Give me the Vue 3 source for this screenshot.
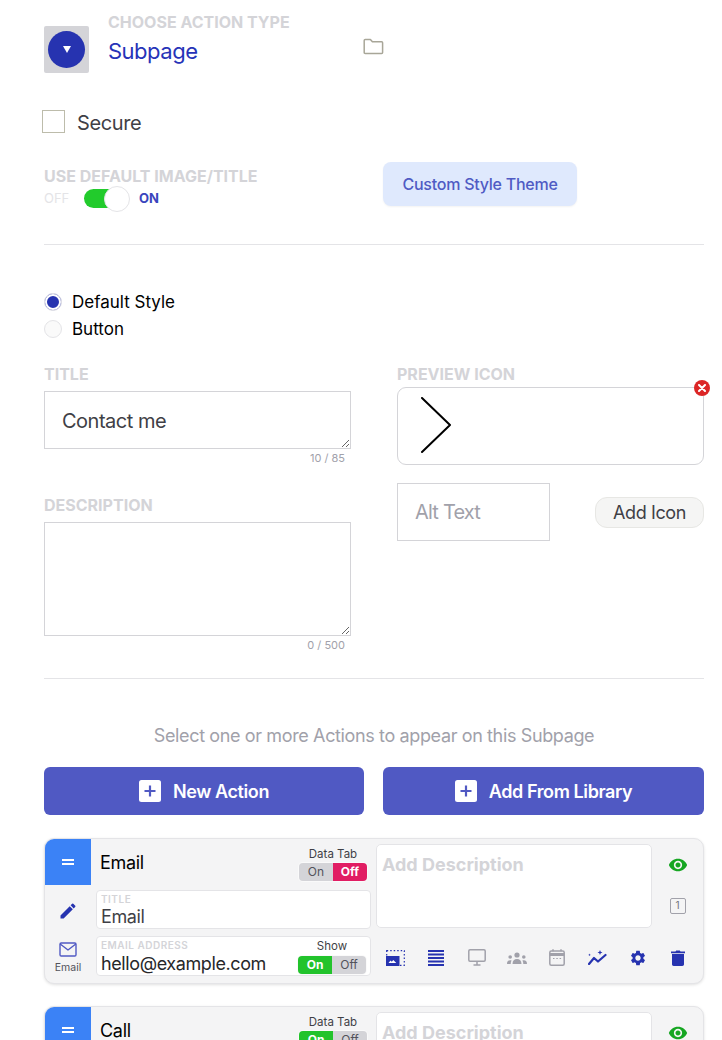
<script setup>
const cards = [
  { name: 'Email', dataOn: false, showTitle: 'Email', fieldLabel: 'EMAIL ADDRESS', value: 'hello@example.com', kind: 'Email', show: true },
  { name: 'Call', dataOn: true, showTitle: 'Call', fieldLabel: 'PHONE NUMBER', value: '555-555-5555', kind: 'Call', show: true }
]
</script>

<template>
  <div class="page">
    <section class="type-row">
      <div class="type-icon">
        <span class="type-circle"><span class="tri"></span></span>
      </div>
      <div class="type-text">
        <div class="label">CHOOSE ACTION TYPE</div>
        <div class="type-name">Subpage</div>
      </div>
      <svg class="folder" width="21" height="17" viewBox="0 0 21 17" fill="none" stroke="#a8a698" stroke-width="1.5" stroke-linejoin="round">
        <path d="M1.2 14.6V2.4c0-.6.4-1 1-1h5.2l2 2.4h9.2c.6 0 1 .4 1 1v9.8c0 .6-.4 1-1 1H2.2c-.6 0-1-.4-1-1z" />
      </svg>
    </section>

    <label class="secure">
      <span class="check"></span>
      <span class="secure-text">Secure</span>
    </label>

    <section class="default-row">
      <div class="default-left">
        <div class="label">USE DEFAULT IMAGE/TITLE</div>
        <div class="toggle-row">
          <span class="off-txt">OFF</span>
          <span class="switch"><span class="knob"></span></span>
          <span class="on-txt">ON</span>
        </div>
      </div>
      <button class="theme-btn">Custom Style Theme</button>
    </section>

    <hr class="rule rule-a" />

    <div class="radios">
      <div class="radio-line"><span class="radio selected"></span>Default Style</div>
      <div class="radio-line"><span class="radio"></span>Button</div>
    </div>

    <section class="form-grid">
      <div>
        <div class="label">TITLE</div>
        <textarea class="box title-box" readonly>Contact me</textarea>
        <div class="count">10 / 85</div>
        <div class="label desc-label">DESCRIPTION</div>
        <textarea class="box desc-box" readonly></textarea>
        <div class="count">0 / 500</div>
      </div>
      <div>
        <div class="label">PREVIEW ICON</div>
        <div class="preview">
          <svg class="chev" width="32" height="58" viewBox="0 0 32 58" fill="none" stroke="#000" stroke-width="2" stroke-linecap="round" stroke-linejoin="round">
            <path d="M2 1l28 27L2 55" />
          </svg>
          <span class="remove">
            <svg width="8" height="8" viewBox="0 0 8 8" stroke="#fff" stroke-width="2" stroke-linecap="round"><path d="M1 1l6 6M7 1L1 7" /></svg>
          </span>
        </div>
        <div class="alt-row">
          <input class="alt" placeholder="Alt Text" />
          <button class="add-icon">Add Icon</button>
        </div>
      </div>
    </section>

    <hr class="rule rule-b" />

    <p class="hint">Select one or more Actions to appear on this Subpage</p>

    <div class="actions">
      <button class="primary">
        <svg width="22" height="22" viewBox="0 0 22 22"><rect width="22" height="22" rx="2.5" fill="#fff" /><path d="M11 5.5v11M5.5 11h11" stroke="#5059c3" stroke-width="2.2" /></svg>
        New Action
      </button>
      <button class="primary">
        <svg width="22" height="22" viewBox="0 0 22 22"><rect width="22" height="22" rx="2.5" fill="#fff" /><path d="M11 5.5v11M5.5 11h11" stroke="#5059c3" stroke-width="2.2" /></svg>
        Add From Library
      </button>
    </div>

    <div v-for="card in cards" :key="card.name" class="card">
      <div class="handle"><span></span><span></span></div>
      <div class="head">
        <span class="card-name">{{ card.name }}</span>
        <div class="tab-wrap">
          <div class="mini-title">Data Tab</div>
          <div class="pill">
            <span :class="card.dataOn ? 'green' : 'idle'">On</span>
            <span :class="card.dataOn ? 'idle' : 'pink'">Off</span>
          </div>
        </div>
      </div>
      <div class="descr">Add Description</div>
      <div class="side">
        <svg width="20" height="20" viewBox="0 0 24 24" fill="#16a622"><path d="M12 4.5C7 4.500 2.730 7.610 1 12c1.730 4.390 6 7.500 11 7.500s9.270-3.110 11-7.500c-1.730-4.390-6-7.500-11-7.500zM12 17c-2.760 0-5-2.240-5-5s2.240-5 5-5 5 2.240 5 5-2.240 5-5 5zm0-8c-1.660 0-3 1.340-3 3s1.340 3 3 3 3-1.340 3-3-1.340-3-3-3z" /></svg>
        <span class="num">1</span>
      </div>
      <div class="edit-cell">
        <svg width="20" height="20" viewBox="0 0 24 24" fill="#2633b0"><path d="M3 17.250V21h3.750L17.810 9.940l-3.750-3.750L3 17.250zM20.710 7.040a1 1 0 000-1.410l-2.340-2.340a1 1 0 00-1.410 0l-1.830 1.830 3.750 3.750 1.830-1.830z" /></svg>
      </div>
      <div class="field title-field">
        <div class="field-label">TITLE</div>
        <div class="field-value">{{ card.showTitle }}</div>
      </div>
      <div class="kind-cell">
        <svg width="18" height="15" viewBox="0 0 18 15" fill="none" stroke="#5059c3" stroke-width="1.4" stroke-linejoin="round"><rect x="1" y="1" width="16" height="13" rx="1.2" /><path d="M1.2 2l7.800 6 7.800-6" /></svg>
        <span>{{ card.kind }}</span>
      </div>
      <div class="field value-field">
        <div>
          <div class="field-label">{{ card.fieldLabel }}</div>
          <div class="field-value dark">{{ card.value }}</div>
        </div>
        <div class="show-wrap">
          <div class="mini-title">Show</div>
          <div class="pill show-pill">
            <span class="green">On</span>
            <span class="idle">Off</span>
          </div>
        </div>
      </div>
      <div class="tools">
        <svg width="20" height="16" viewBox="0 0 20 16"><rect x=".7" y=".7" width="17.600" height="14.600" fill="none" stroke="#2633b0" stroke-width="1.200" stroke-dasharray="1.500 2" /><path d="M0 6h13.500v10H0z" fill="#2633b0" /><path d="M2.500 13l2-2.500 1.300 1.300L7.300 10l3 3z" fill="#fff" /></svg>
        <svg width="16" height="16" viewBox="0 0 16 16" stroke="#2633b0" stroke-width="1.800"><path d="M0 1h16M0 4.500h16M0 8h16M0 11.500h16M0 15h16" /></svg>
        <svg width="18" height="17" viewBox="0 0 18 17" fill="none" stroke="#a1a1aa" stroke-width="1.500"><rect x=".8" y=".8" width="16.400" height="11.400" rx="1.200" /><path d="M9 12.500v3M5.500 16h7" /></svg>
        <svg width="20" height="12" viewBox="0 0 20 12" fill="#a1a1aa"><circle cx="10" cy="3" r="2.600" /><circle cx="3.200" cy="5" r="1.800" /><circle cx="16.800" cy="5" r="1.800" /><path d="M5.500 12c0-3.500 1.800-5 4.500-5s4.500 1.500 4.500 5zM0 12c0-2.500 1-3.700 3.200-3.700.6 0 1 .1 1.400.3-.6 1-.9 2.100-.9 3.400zM20 12c0-2.500-1-3.700-3.200-3.700-.6 0-1 .1-1.400.3.600 1 .9 2.100.9 3.400z" /></svg>
        <svg width="16" height="17" viewBox="0 0 16 17" fill="none" stroke="#a1a1aa" stroke-width="1.500"><rect x=".8" y="2" width="14.400" height="14.200" rx="1.500" /><path d="M.8 5.500h14.400" stroke-width="3" /><path d="M4 .3v2M12 .3v2" /><path d="M4 9.500h1.500M7.300 9.500h1.500M10.600 9.500h1.500" stroke-width="1.200" /></svg>
        <svg width="19" height="15" viewBox="0 0 19 15" fill="#2633b0"><path d="M1 14l5-6 4 3.500L17.500 5" fill="none" stroke="#2633b0" stroke-width="2.200" stroke-linecap="round" stroke-linejoin="round" /><path d="M12 0l.7 1.800 1.800.7-1.800.7-.7 1.800-.7-1.800-1.800-.7 1.800-.7zM1.500 3.500l.4 1 1 .4-1 .4-.4 1-.4-1-1-.4 1-.4z" /></svg>
        <svg width="18" height="18" viewBox="0 0 24 24" fill="#2633b0"><path d="M19.140 12.940c.04-.3.060-.61.060-.94 0-.32-.02-.64-.07-.94l2.030-1.580c.18-.14.230-.41.120-.61l-1.920-3.320c-.12-.22-.37-.29-.59-.22l-2.390.96c-.5-.38-1.030-.7-1.620-.94l-.36-2.540c-.04-.24-.24-.41-.48-.41h-3.840c-.24 0-.43.17-.47.41l-.36 2.540c-.59.24-1.130.57-1.620.94l-2.390-.96c-.22-.08-.47 0-.59.22L2.740 8.870c-.12.21-.08.47.12.61l2.030 1.580c-.05.3-.09.63-.09.94s.02.64.07.94l-2.030 1.580c-.18.14-.23.41-.12.61l1.920 3.320c.12.22.37.29.59.22l2.390-.96c.5.38 1.030.7 1.620.94l.36 2.540c.05.24.24.41.48.41h3.840c.24 0 .44-.17.47-.41l.36-2.540c.59-.24 1.130-.56 1.620-.94l2.390.96c.22.08.47 0 .59-.22l1.920-3.320c.12-.22.07-.47-.12-.61l-2.010-1.580zM12 15.600c-1.980 0-3.600-1.620-3.600-3.600s1.620-3.600 3.600-3.600 3.600 1.620 3.600 3.600-1.620 3.600-3.600 3.600z" /></svg>
        <svg width="14" height="16" viewBox="0 0 14 16" fill="#2633b0"><path d="M0 1.500h4.500L5.200.5h3.600l.7 1H14V3.200H0zM1 4h12v10.300c0 .9-.7 1.700-1.700 1.700H2.700C1.700 16 1 15.200 1 14.300z" /></svg>
      </div>
    </div>
  </div>
</template>

<style scoped>
.page {
  box-sizing: border-box;
  width: 722px;
  height: 1040px;
  overflow: hidden;
  padding: 14px 18px 0 44px;
  font-family: Inter, "Liberation Sans", sans-serif;
  color: #3f3f46;
  background: #fff;
}
.label {
  font-size: 16px;
  line-height: 16px;
  font-weight: 700;
  color: #d4d4d8;
}
.type-row {
  display: flex;
  align-items: flex-start;
  height: 59px;
}
.type-icon {
  display: flex;
  align-items: center;
  justify-content: center;
  width: 45px;
  height: 47px;
  margin-top: 12px;
  border-radius: 2px;
  background: #d4d4d8;
}
.type-circle {
  display: flex;
  align-items: center;
  justify-content: center;
  width: 37px;
  height: 37px;
  border-radius: 50%;
  background: #2633b0;
}
.tri {
  width: 0;
  height: 0;
  border-left: 4px solid transparent;
  border-right: 4px solid transparent;
  border-top: 7px solid #fff;
}
.type-text {
  width: 255px;
  margin-left: 19px;
}
.type-name {
  margin-top: 7px;
  font-size: 22px;
  line-height: 28px;
  letter-spacing: -0.5px;
  color: #2633b8;
}
.folder {
  margin-top: 24px;
}
.secure {
  display: flex;
  align-items: flex-start;
  gap: 12px;
  margin: 37px 0 0 -2px;
  font-size: 20px;
  line-height: 23px;
  letter-spacing: -0.4px;
}
.secure-text {
  margin-top: 2px;
}
.check {
  box-sizing: border-box;
  width: 23px;
  height: 23px;
  border: 1px solid #bdbcab;
}
.default-row {
  display: flex;
  align-items: flex-start;
  margin-top: 27px;
}
.default-left {
  width: 339px;
  padding-top: 6px;
}
.toggle-row {
  display: flex;
  align-items: center;
  height: 20px;
  margin-top: 4px;
  font-size: 13px;
}
.off-txt {
  width: 40px;
  color: #e4e4e7;
}
.on-txt {
  margin-left: 11px;
  font-weight: 700;
  color: #3a45bd;
}
.switch {
  position: relative;
  width: 44px;
  height: 19px;
  border-radius: 10px;
  background: #22cb2c;
}
.knob {
  position: absolute;
  top: -3px;
  right: -2px;
  box-sizing: border-box;
  width: 26px;
  height: 26px;
  border: 1px solid #e4e4e7;
  border-radius: 50%;
  background: #fff;
}
.theme-btn {
  width: 194px;
  height: 44px;
  border: 0;
  border-radius: 8px;
  background: #dfe9fd;
  box-shadow: 0 1px 2px rgba(0, 0, 0, 0.05);
  font: 500 16px Inter, sans-serif;
  letter-spacing: -0.25px;
  color: #4f5bc4;
}
.rule {
  height: 1px;
  margin: 0;
  border: 0;
  background: #e4e4e7;
}
.rule-a {
  margin-top: 36px;
}
.radios {
  margin-top: 43px;
  font-size: 17px;
  color: #000;
}
.radio-line {
  display: flex;
  align-items: center;
  gap: 10px;
  height: 27px;
}
.radio {
  box-sizing: border-box;
  width: 18px;
  height: 18px;
  border: 1px solid #e4e4e7;
  border-radius: 50%;
  background: #fafafa;
}
.radio.selected {
  background: #2633b0;
  box-shadow: inset 0 0 0 2px #fff;
}
.form-grid {
  display: grid;
  grid-template-columns: 307px 307px;
  gap: 46px;
  margin-top: 24px;
}
.box {
  display: block;
  box-sizing: border-box;
  width: 307px;
  padding: 17px 17px 15px;
  border: 1px solid #d4d4d8;
  border-radius: 0;
  outline: none;
  background: #fff;
  font: 20px/24px Inter, sans-serif;
  letter-spacing: -0.5px;
  color: #3f3f46;
}
.title-box {
  height: 58px;
  margin-top: 9px;
}
.desc-box {
  height: 114px;
  margin-top: 9px;
}
.count {
  height: 18px;
  padding-right: 6px;
  font-size: 11px;
  line-height: 18px;
  text-align: right;
  color: #a1a1aa;
}
.desc-label {
  margin-top: 30px;
}
.preview {
  position: relative;
  box-sizing: border-box;
  height: 78px;
  margin-top: 5px;
  padding: 9px 0 0 22px;
  border: 1px solid #d4d4d8;
  border-radius: 9px;
}
.chev {
  display: block;
}
.remove {
  position: absolute;
  top: -8px;
  right: -7px;
  display: flex;
  align-items: center;
  justify-content: center;
  width: 16px;
  height: 16px;
  border-radius: 50%;
  background: #dc2626;
}
.alt-row {
  display: flex;
  align-items: center;
  justify-content: space-between;
  margin-top: 18px;
}
.alt {
  box-sizing: border-box;
  width: 153px;
  height: 58px;
  padding: 0 17px;
  border: 1px solid #d4d4d8;
  border-radius: 0;
  outline: none;
  font: 20px Inter, sans-serif;
  letter-spacing: -0.8px;
}
.alt::placeholder {
  color: #a1a1aa;
  opacity: 1;
}
.add-icon {
  width: 109px;
  height: 31px;
  border: 1px solid #e7e7e4;
  border-radius: 12px;
  background: #f5f5f4;
  font: 18px Inter, sans-serif;
  letter-spacing: -0.4px;
  color: #3f3f46;
}
.rule-b {
  margin-top: 24px;
}
.hint {
  margin: 46px 0 0;
  font-size: 18px;
  line-height: 22px;
  letter-spacing: -0.37px;
  text-align: center;
  color: #a1a1aa;
}
.actions {
  display: grid;
  grid-template-columns: 320px 321px;
  gap: 19px;
  margin-top: 20px;
}
.primary {
  display: flex;
  align-items: center;
  justify-content: center;
  gap: 12px;
  height: 48px;
  border: 0;
  border-radius: 6px;
  background: #5059c3;
  font: 600 18px Inter, sans-serif;
  letter-spacing: -0.4px;
  color: #fff;
}
.card {
  display: grid;
  grid-template-columns: 46px 285px 276px 1fr;
  grid-template-rows: 46px 51px 47px;
  box-sizing: border-box;
  height: 146px;
  margin-top: 23px;
  overflow: hidden;
  border: 1px solid #e4e4e7;
  border-radius: 10px;
  background: #f4f4f5;
  box-shadow: 0 1px 3px rgba(0, 0, 0, 0.12);
}
.card + .card {
  margin-top: 22px;
}
.handle {
  display: flex;
  flex-direction: column;
  align-items: center;
  justify-content: center;
  gap: 2px;
  background: #3b82f6;
}
.handle span {
  width: 12px;
  height: 2px;
  background: #fff;
}
.head {
  display: flex;
  align-items: center;
  justify-content: space-between;
  padding: 0 9px;
}
.card-name {
  font-size: 18px;
  letter-spacing: -0.3px;
  color: #000;
}
.tab-wrap {
  margin-top: 3px;
}
.mini-title {
  font-size: 11.5px;
  line-height: 15px;
  text-align: center;
  color: #3f3f46;
}
.pill {
  display: flex;
  overflow: hidden;
  width: 68px;
  height: 18px;
  margin-top: 1px;
  border-radius: 4px;
  box-shadow: 0 0 0 1px #fafafa;
  font-size: 12px;
  line-height: 18px;
  text-align: center;
}
.pill span {
  width: 50%;
}
.idle {
  background: #d4d4d8;
  color: #52525b;
}
.pink {
  background: #e11d63;
  color: #fff;
  font-weight: 700;
}
.green {
  background: #22c32c;
  color: #fff;
  font-weight: 700;
}
.descr {
  grid-row: 1 / 3;
  grid-column: 3;
  box-sizing: border-box;
  width: 276px;
  height: 84px;
  margin-top: 5px;
  padding: 10px 5px;
  border: 1px solid #e4e4e7;
  border-radius: 5px;
  background: #fff;
  font-size: 18px;
  font-weight: 700;
  line-height: 20px;
  color: #d4d4d8;
}
.side {
  grid-row: 1 / 3;
  grid-column: 4;
  display: flex;
  flex-direction: column;
  align-items: center;
  gap: 23px;
  padding-top: 16px;
}
.num {
  box-sizing: border-box;
  width: 16px;
  height: 16px;
  border: 1.5px solid #a1a1aa;
  border-radius: 2px;
  font-size: 10px;
  line-height: 13px;
  text-align: center;
  color: #71717a;
}
.edit-cell {
  grid-row: 2;
  grid-column: 1;
  display: flex;
  align-items: center;
  justify-content: center;
}
.field {
  box-sizing: border-box;
  width: 275px;
  margin-left: 5px;
  padding: 3px 4px;
  border: 1px solid #e4e4e7;
  border-radius: 4px;
  background: #fff;
}
.title-field {
  grid-row: 2;
  grid-column: 2;
  height: 39px;
  margin-top: 5px;
}
.value-field {
  grid-row: 3;
  grid-column: 2;
  display: flex;
  justify-content: space-between;
  height: 40px;
}
.field-label {
  font-size: 10px;
  font-weight: 600;
  line-height: 10px;
  letter-spacing: 0.5px;
  color: #d4d4d8;
}
.field-value {
  margin-top: 1px;
  font-size: 18px;
  line-height: 23px;
  letter-spacing: -0.4px;
  color: #3f3f46;
}
.field-value.dark {
  margin-top: 2px;
  color: #27272a;
}
.kind-cell {
  grid-row: 3;
  grid-column: 1;
  display: flex;
  flex-direction: column;
  align-items: center;
  gap: 4px;
  padding-top: 6px;
  font-size: 10.5px;
  line-height: 14px;
  color: #52525b;
}
.show-wrap {
  margin-top: -1px;
}
.show-pill {
  margin-top: 2px;
}
.tools {
  grid-row: 3;
  grid-column: 3 / 5;
  display: grid;
  grid-template-columns: repeat(8, 40.3px);
  justify-items: center;
  align-items: center;
  padding: 0 0 4px;
}
</style>

<style>
html,
body {
  margin: 0;
  background: #fff;
}
</style>
